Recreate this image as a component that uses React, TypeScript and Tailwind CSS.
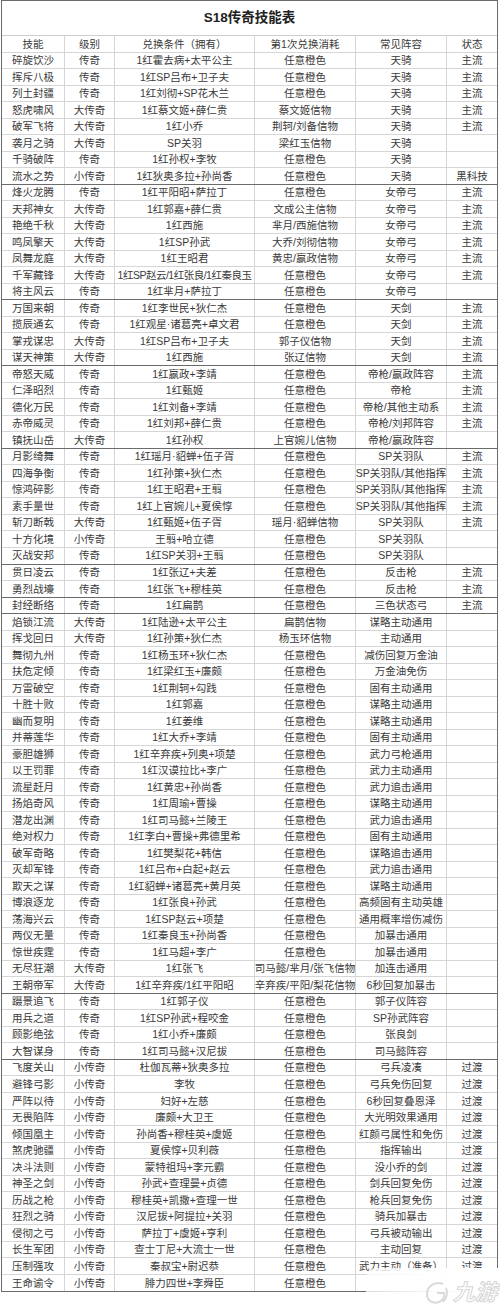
import React from 'react';

const rows = `碎旋饮沙|传奇|1红霍去病+太平公主|任意橙色|天骑|主流
挥斥八极|传奇|1红SP吕布+卫子夫|任意橙色|天骑|主流
列土封疆|传奇|1红刘彻+SP花木兰|任意橙色|天骑|主流
怒虎啸风|大传奇|1红蔡文姬+薛仁贵|蔡文姬信物|天骑|主流
破军飞将|大传奇|1红小乔|荆轲/刘备信物|天骑|主流
袭月之骑|大传奇|SP关羽|梁红玉信物|天骑|
千骑破阵|传奇|1红孙权+李牧|任意橙色|天骑|
流水之势|小传奇|1红狄奥多拉+孙尚香|任意橙色|天骑|黑科技
烽火龙腾|传奇|1红平阳昭+萨拉丁|任意橙色|女帝弓|主流
天邦神女|大传奇|1红郭嘉+薛仁贵|文成公主信物|女帝弓|主流
艳绝千秋|大传奇|1红西施|芈月/西施信物|女帝弓|主流
鸣凤擎天|大传奇|1红SP孙武|大乔/刘彻信物|女帝弓|主流
凤舞龙庭|大传奇|1红王昭君|黄忠/嬴政信物|女帝弓|主流
千军藏锋|大传奇|1红SP赵云/1红张良/1红秦良玉|任意橙色|女帝弓|主流
将主风云|传奇|1红芈月+萨拉丁|任意橙色|女帝弓|
万国来朝|传奇|1红李世民+狄仁杰|任意橙色|天剑|主流
揽辰通玄|传奇|1红观星·诸葛亮+卓文君|任意橙色|天剑|主流
掌戎谋忠|大传奇|1红SP吕布+卫子夫|郭子仪信物|天剑|主流
谋天神策|大传奇|1红西施|张辽信物|天剑|主流
帝怒天威|传奇|1红嬴政+李靖|任意橙色|帝枪/嬴政阵容|主流
仁泽昭烈|传奇|1红甄姬|任意橙色|帝枪|主流
德化万民|传奇|1红刘备+李靖|任意橙色|帝枪/其他主动系|主流
赤帝威灵|传奇|1红刘邦+薛仁贵|任意橙色|帝枪/刘邦阵容|主流
镇抚山岳|大传奇|1红孙权|上官婉儿信物|帝枪/嬴政阵容|
月影绮舞|传奇|1红瑶月·貂蝉+伍子胥|任意橙色|SP关羽队|主流
四海争衡|传奇|1红孙策+狄仁杰|任意橙色|SP关羽队/其他指挥|主流
惊鸿碎影|传奇|1红王昭君+王翦|任意橙色|SP关羽队/其他指挥|主流
素手量世|传奇|1红上官婉儿+夏侯惇|任意橙色|SP关羽队/其他指挥|主流
斩刀断戟|大传奇|1红甄姬+伍子胥|瑶月·貂蝉信物|SP关羽队|主流
十方化境|小传奇|王翦+哈立德|任意橙色|SP关羽队|
灭战安邦|传奇|1红SP关羽+王翦|任意橙色|SP关羽队|
贯日凌云|传奇|1红张辽+夫差|任意橙色|反击枪|主流
勇烈战壕|传奇|1红张飞+穆桂英|任意橙色|反击枪|主流
封经断络|传奇|1红扁鹊|任意橙色|三色状态弓|主流
焰锁江流|大传奇|1红陆逊+太平公主|扁鹊信物|谋略主动通用|
挥戈回日|大传奇|1红孙策+狄仁杰|杨玉环信物|主动通用|
舞彻九州|传奇|1红杨玉环+狄仁杰|任意橙色|减伤回复万金油|
扶危定倾|传奇|1红梁红玉+廉颇|任意橙色|万金油免伤|
万雷破空|传奇|1红荆轲+勾践|任意橙色|固有主动通用|
十胜十败|传奇|1红郭嘉|任意橙色|谋略主动通用|
幽而复明|传奇|1红姜维|任意橙色|谋略主动通用|
并蒂莲华|传奇|1红大乔+李靖|任意橙色|固有主动通用|
豪胆雄狮|传奇|1红辛弃疾+列奥+项楚|任意橙色|武力弓枪通用|
以王罚罪|传奇|1红汉谟拉比+李广|任意橙色|武力主动通用|
流星赶月|传奇|1红黄忠+孙尚香|任意橙色|武力追击通用|
扬焰奇风|传奇|1红周瑜+曹操|任意橙色|谋略主动通用|
潜龙出渊|传奇|1红司马懿+兰陵王|任意橙色|武力追击通用|
绝对权力|传奇|1红李白+曹操+弗德里希|任意橙色|固有主动通用|
破军奇略|传奇|1红樊梨花+韩信|任意橙色|谋略追击通用|
灭却军锋|传奇|1红吕布+白起+赵云|任意橙色|武力追击通用|
欺天之谋|传奇|1红貂蝉+诸葛亮+黄月英|任意橙色|谋略主动通用|
博浪逐龙|传奇|1红张良+孙武|任意橙色|高频固有主动英雄|
荡海兴云|传奇|1红SP赵云+项楚|任意橙色|通用概率增伤减伤|
两仪无量|传奇|1红秦良玉+孙尚香|任意橙色|加暴击通用|
惊世疾霆|传奇|1红马超+李广|任意橙色|加暴击通用|
无尽狂潮|大传奇|1红张飞|司马懿/芈月/张飞信物|加连击通用|
王朝帝军|大传奇|1红辛弃疾/1红平阳昭|辛弃疾/平阳/梨花信物|6秒回复加暴击|
蹑景追飞|传奇|1红郭子仪|任意橙色|郭子仪阵容|
用兵之道|传奇|1红SP孙武+程咬金|任意橙色|SP孙武阵容|
顾影绝弦|传奇|1红小乔+廉颇|任意橙色|张良剑|
大智谋身|传奇|1红司马懿+汉尼拔|任意橙色|司马懿阵容|
飞度关山|小传奇|杜伽瓦蒂+狄奥多拉|任意橙色|弓兵凌凑|过渡
避锋弓影|小传奇|李牧|任意橙色|弓兵免伤回复|过渡
严阵以待|小传奇|妇好+左慈|任意橙色|6秒回复叠恩泽|过渡
无畏陷阵|小传奇|廉颇+大卫王|任意橙色|大光明效果通用|过渡
倾国凰主|小传奇|孙尚香+穆桂英+虞姬|任意橙色|红颜弓属性和免伤|过渡
煞虎驰疆|小传奇|夏侯惇+贝利薇|任意橙色|指挥输出|过渡
决斗法则|小传奇|蒙特祖玛+李元霸|任意橙色|没小乔的剑|过渡
神圣之剑|小传奇|孙武+查理曼+贞德|任意橙色|剑兵回复免伤|过渡
历战之枪|小传奇|穆桂英+凯撒+查理一世|任意橙色|枪兵回复免伤|过渡
狂烈之骑|小传奇|汉尼拔+阿提拉+关羽|任意橙色|骑兵加暴击|过渡
侵彻之弓|小传奇|萨拉丁+虞姬+亨利|任意橙色|弓兵被动输出|过渡
长生军团|小传奇|查士丁尼+大流士一世|任意橙色|主动回复|过渡
压制强攻|小传奇|秦叔宝+尉迟恭|任意橙色|武力主动（准备）|过渡
王命谕令|小传奇|腓力四世+李舜臣|任意橙色||`
  .split('\n')
  .map((l) => l.split('|'));

// last row of each group gets the dark rule
const groupEnds = [7, 14, 18, 23, 30, 32, 33, 56, 60];

const headers = ['技能', '级别', '兑换条件（拥有）', '第1次兑换消耗', '常见阵容', '状态'];

function Row({ cells, dark, last }: { cells: string[]; dark?: boolean; last?: boolean }) {
  return (
    <div
      className={
        'grid grid-cols-[63px_50px_140px_101px_91px_1fr] h-[16.53px] ' +
        (last ? '' : dark ? 'border-b-[1.5px] border-[#6b6b6b]' : 'border-b border-[#d6d6d6]')
      }
    >
      {cells.map((c, i) => (
        <div
          key={i}
          className={
            'flex items-center justify-center whitespace-nowrap leading-none ' +
            (c.length > 16 ? 'tracking-[-0.5px] ' : '') +
            (i < 5 ? 'border-r border-[#d6d6d6]' : '')
          }
        >
          {c}
        </div>
      ))}
    </div>
  );
}

export default function App() {
  return (
    <div
      className="relative w-[500px] h-[1312px] bg-white text-[#3a3a3a] text-[10.5px]"
      style={{ fontFamily: '"Liberation Sans", "Noto Sans CJK SC", sans-serif' }}
    >
      <div className="ml-[1px] w-[497px] border-[1.5px] border-[#6b6b6b]">
        <div className="h-[35px] flex items-center justify-center border-b border-[#cfcfcf] text-[13.5px] font-bold text-[#222]">
          S18传奇技能表
        </div>
        <Row cells={headers} />
        {rows.map((r, i) => (
          <Row key={i} cells={r} dark={groupEnds.includes(i)} last={i === rows.length - 1} />
        ))}
      </div>

      {/* 九游 watermark */}
      <div className="absolute left-[366px] top-[1268px] w-[134px] h-[44px] rounded-l-[10px] bg-gradient-to-r from-white/75 via-white/95 to-white flex items-center justify-end gap-[2px] pr-[3px] pt-[6px]">
        <svg width="28" height="26" viewBox="0 0 28 26" fill="none" stroke="#dadada" strokeWidth="2">
          <path d="M20 4 C12 1 4 6 4 14 C4 21 10 24 16 22 C20 20 22 17 21 13 L14 13" />
          <path d="M23 8 C25 12 24 18 20 22" />
        </svg>
        <span
          className="text-[22px] italic font-bold text-white leading-none"
          style={{ WebkitTextStroke: '1px #d6d6d6' }}
        >
          九游
        </span>
      </div>
    </div>
  );
}
